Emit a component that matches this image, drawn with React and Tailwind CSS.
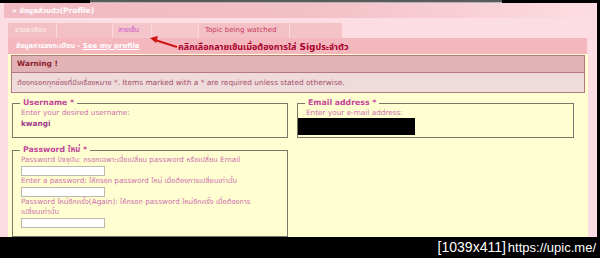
export default function App() {
  const thai = "font-['DejaVu_Sans','Noto_Sans_Thai','Noto_Sans',sans-serif]";
  return (
    <div className={`w-[600px] h-[258px] flex flex-col bg-black overflow-hidden ${thai}`}>
      <div className="h-[237px] flex">
        <div className="relative flex-1 flex flex-col bg-[#fcdde3]">
          {/* top strip */}
          <div className="h-[3px] flex">
            <div className="w-[90px] bg-black" />
            <div className="w-[412px] flex flex-col">
              <div className="h-[2px] bg-[#5a5a5a]" />
              <div className="h-[1px] bg-[#b5b5b5]" />
            </div>
            <div className="flex-1 bg-black" />
          </div>

          {/* header */}
          <div className="h-[17px] ml-[4px] flex items-center pl-[8px] bg-gradient-to-r from-[#f2bac2] via-[#f3bfc6] to-[#fcdde3] text-white font-bold text-[7.5px]">
            » ข้อมูลส่วนตัว(Profile)
          </div>
          <div className="h-[5px]" />

          {/* tabs */}
          <div className="h-[15px] ml-[8px] flex text-[7px] leading-[15px]">
            <div className="w-[49px] bg-[#f2c0c5] border-r border-[#fad8dc] pl-[7px] text-[#fdf0f2]">รายละเอียด</div>
            <div className="w-[56px] bg-[#f2c0c5] border-r border-[#fad8dc]" />
            <div className="w-[39px] bg-[#f4c6cb] border-r border-[#fad8dc] pl-[5px] text-[#cc55cc]">ลายเซ็น</div>
            <div className="w-[47px] bg-[#f5c8cd] border-r border-[#fad8dc]" />
            <div className="w-[91px] bg-[#f2c0c5] border-r border-[#fad8dc] pl-[6px] text-[#cc3b5f]">Topic being watched</div>
            <div className="w-[52px] bg-[#f3c3c8]" />
          </div>

          {/* bar */}
          <div className="h-[18px] ml-[8px] w-[579px] bg-[#f4b7bd] flex items-center pl-[8px] text-white font-bold text-[7px]">
            ข้อมูลการลงทะเบียน -&nbsp;<span className="underline">See my profile</span>
          </div>

          {/* content */}
          <div className="flex-1 ml-[8px] w-[580px] bg-[#fefed1] pt-[1px] flex flex-col">
            <div className="ml-[3px] w-[574px] border border-[#b27a7c] text-[7.4px]">
              <div className="h-[17px] bg-[#e2b3b6] border-b border-[#b27a7c] flex items-center pl-[5px] font-bold text-[#8b1c2c]">
                Warning !
              </div>
              <div className="h-[19px] bg-[#efdbdb] flex items-center pl-[5px] text-[#a5506a]">
                ต้องกรอกทุกช่องที่มีเครื่องหมาย *. Items marked with a * are required unless stated otherwise.
              </div>
            </div>

            <div className="pl-[4px] mt-[5px] flex gap-[9px] text-[7.3px] leading-[10px]">
              <div className="w-[276px] flex flex-col">
                <fieldset className="border border-[#77776a] pl-[8px] pb-[8px]">
                  <legend className="ml-[-1px] px-[3px] font-bold text-[7.8px] text-[#c2459b]">Username *</legend>
                  <div className="text-[#cf70b0]">Enter your desired username:</div>
                  <div className="mt-[1px] font-bold text-[#9c3a8f]">kwangi</div>
                </fieldset>
                <fieldset className="mt-[7px] border border-[#77776a] pl-[8px] pb-[8px]">
                  <legend className="ml-[-1px] px-[3px] font-bold text-[7.8px] text-[#c2459b]">Password ใหม่ *</legend>
                  <div className="text-[#cf70b0]">Password ปัจจุบัน: กรอกเฉพาะเมื่อเปลี่ยน password หรือเปลี่ยน Email</div>
                  <div className="mt-[1px] w-[84px] h-[10px] bg-white border border-[#b9b9ad]" />
                  <div className="text-[#cf70b0]">Enter a password: ให้กรอก password ใหม่ เมื่อต้องการเปลี่ยนเท่านั้น</div>
                  <div className="mt-[1px] w-[84px] h-[10px] bg-white border border-[#b9b9ad]" />
                  <div className="text-[#cf70b0]">
                    Password ใหม่อีกครั้ง(Again): ให้กรอก password ใหม่อีกครั้ง เมื่อต้องการ
                    <br />
                    เปลี่ยนเท่านั้น
                  </div>
                  <div className="mt-[1px] w-[84px] h-[10px] bg-white border border-[#b9b9ad]" />
                </fieldset>
              </div>
              <div className="w-[277px] self-start">
                <fieldset className="border border-[#77776a] pl-[8px] pb-[2px]">
                  <legend className="ml-[-1px] px-[3px] font-bold text-[7.8px] text-[#c2459b]">Email address *</legend>
                  <div className="text-[#cf70b0]">Enter your e-mail address:</div>
                  <div className="-ml-[8px] w-[117px] h-[17px] bg-black" />
                </fieldset>
              </div>
            </div>
          </div>

          {/* annotation */}
          <div className="absolute left-[178px] top-[41px] text-[9px] leading-[12px] font-bold text-[#a8002c] whitespace-nowrap">
            คลิกเลือกลายเซ็นเมื่อต้องการใส่ Sigประจำตัว
          </div>
          <svg className="absolute left-0 top-0" width="200" height="60" viewBox="0 0 200 60">
            <line x1="177" y1="47" x2="155" y2="40" stroke="#d01414" strokeWidth="2" />
            <polygon points="150,38 158,36 156,43" fill="#d01414" />
          </svg>
        </div>
        <div className="w-[3px] bg-black" />
      </div>

      {/* bottom bar */}
      <div className="h-[21px] flex items-center justify-end pr-[4px] text-white">
        <span className="font-['Liberation_Sans',sans-serif] text-[14px]">[1039x411]</span>
        <span className="ml-[2px] font-['Liberation_Sans',sans-serif] text-[13px]">https://upic.me/</span>
      </div>
    </div>
  );
}
